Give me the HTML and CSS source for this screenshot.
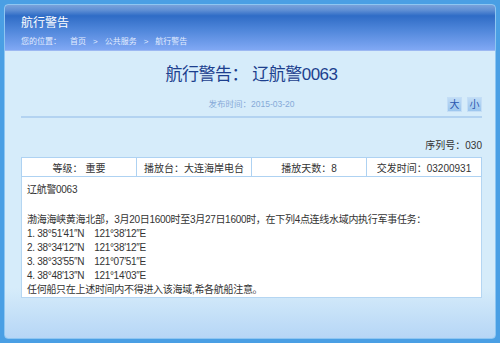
FILE: index.html
```html
<!DOCTYPE html>
<html lang="zh-CN">
<head>
  <meta charset="UTF-8" />
  <meta name="viewport" content="width=device-width, initial-scale=1.0"/>
  <title>航行警告</title>
  <link rel="stylesheet" href="styles.css">
</head>
<body>
  <div class="panel">
    <div class="header">
      <h1>航行警告</h1>
      <div class="crumb">
        <span class="here">您的位置：</span>
        <span>首页</span><span>&gt;</span>
        <span>公共服务</span><span>&gt;</span>
        <span>航行警告</span>
      </div>
    </div>
    <div class="content">
      <h2 class="title">航行警告： 辽航警0063</h2>
      <div class="meta">
        <span></span>
        <span class="date">发布时间：2015-03-20</span>
        <div class="size-btns">
          <button class="size-btn">大</button>
          <button class="size-btn">小</button>
        </div>
      </div>
      <div class="serial">序列号：030</div>
      <table class="info">
        <tr>
          <td>等级：&nbsp;重要</td>
          <td>播放台：大连海岸电台</td>
          <td>播放天数：8</td>
          <td>交发时间：03200931</td>
        </tr>
      </table>
      <div class="body-text">
        <div class="lead">辽航警0063</div>
        渤海海峡黄海北部，3月20日1600时至3月27日1600时，在下列4点连线水域内执行军事任务：<br>
        1. 38°51′41″N&nbsp;&nbsp;&nbsp; 121°38′12″E<br>
        2. 38°34′12″N&nbsp;&nbsp;&nbsp; 121°38′12″E<br>
        3. 38°33′55″N&nbsp;&nbsp;&nbsp; 121°07′51″E<br>
        4. 38°48′13″N&nbsp;&nbsp;&nbsp; 121°14′03″E<br>
        任何船只在上述时间内不得进入该海域,希各航船注意。
      </div>
    </div>
  </div>
</body>
</html>
```

FILE: styles.css
```css
body {
  margin: 0;
  padding: 4px;
  height: 343px;
  box-sizing: border-box;
  background: #4a9fe4;
  font-family: "Liberation Sans", "Noto Sans CJK SC", sans-serif;
  overflow: hidden;
}
.panel {
  height: 335px;
  box-sizing: border-box;
  border: 1px solid #8ec6f2;
  border-radius: 4px;
  background: linear-gradient(to bottom, #d6ecfa 0%, #d6ecfa 85%, #b6d6f6 100%);
  overflow: hidden;
}
.header {
  height: 46px;
  box-sizing: border-box;
  padding: 10px 0 0 16px;
  background: linear-gradient(to bottom, #7aa2da 0%, #5d8ed4 12%, #2f6cc6 24%, #4f86da 55%, #80a8f4 100%);
  border-bottom: 1px solid #9cb8f2;
  color: #fff;
}
.header h1 {
  margin: 0;
  font-size: 12px;
  font-weight: normal;
  line-height: 16px;
}
.crumb {
  display: flex;
  gap: 7px;
  margin-top: 5px;
  font-size: 8px;
  line-height: 11px;
  color: #e2ecff;
}
.crumb .here {
  margin-right: 2px;
}
.content {
  padding: 0 13px 0 16px;
}
.title {
  margin: 12px 0 0;
  text-align: center;
  font-size: 17px;
  font-weight: normal;
  letter-spacing: -0.5px;
  line-height: 24px;
  color: #1c3f8e;
}
.meta {
  display: grid;
  grid-template-columns: 1fr auto 1fr;
  align-items: center;
  margin-top: 10px;
  padding-bottom: 4px;
  border-bottom: 2px solid #b3d3f1;
}
.date {
  font-size: 8.5px;
  line-height: 15px;
  color: #86aad8;
}
.size-btns {
  justify-self: end;
  display: flex;
  gap: 5px;
}
.size-btn {
  width: 15px;
  height: 15px;
  padding: 0;
  border: 1px solid #c4def6;
  background: linear-gradient(to bottom, #c0dcf6, #9cc6ee);
  color: #2a56ae;
  font-size: 10px;
  line-height: 13px;
  font-family: inherit;
}
.serial {
  margin-top: 21px;
  text-align: right;
  font-size: 10px;
  line-height: 14px;
  color: #333;
}
.info {
  width: 100%;
  margin-top: 4px;
  border-collapse: collapse;
  table-layout: fixed;
  background: #fff;
}
.info td {
  height: 18px;
  padding: 0;
  border: 1px solid #aed2f2;
  text-align: center;
  font-size: 10px;
  color: #333;
}
.body-text {
  height: 121px;
  box-sizing: border-box;
  padding: 6px 5px;
  background: #fff;
  border: 1px solid #b5d6f2;
  border-top: none;
  font-size: 10px;
  letter-spacing: -0.3px;
  line-height: 14px;
  color: #333;
}
.lead {
  margin-bottom: 16px;
}
```
